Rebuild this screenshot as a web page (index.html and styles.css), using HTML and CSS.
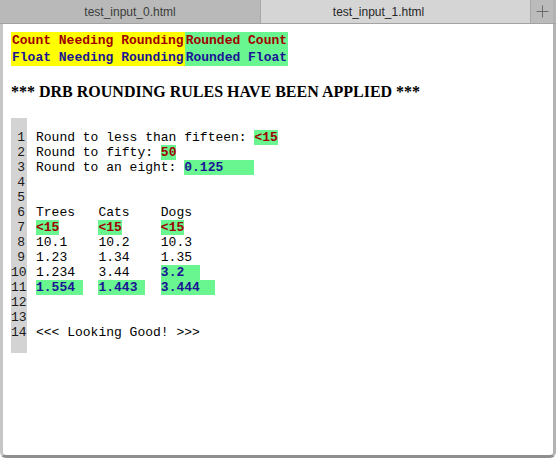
FILE: index.html
```html
<!DOCTYPE html>
<html>
<head>
<meta charset="utf-8">
<link rel="stylesheet" href="styles.css">
</head>
<body>
<div class="window">
  <div class="tabs">
    <div class="tab tab-inactive">test_input_0.html</div>
    <div class="tab tab-active">test_input_1.html</div>
    <div class="newtab">
      <svg width="13" height="13" viewBox="0 0 13 13"><path d="M6.5 0.5v12M0.5 6.5h12" stroke="#6b6b6b" stroke-width="1" fill="none"/></svg>
    </div>
    <div class="edge"></div>
  </div>
  <div class="page">
    <table class="legend">
      <tr class="count"><td class="need">Count Needing Rounding</td><td class="done">Rounded Count</td></tr>
      <tr class="float"><td class="need">Float Needing Rounding</td><td class="done">Rounded Float</td></tr>
    </table>
    <h3 class="title">*** DRB ROUNDING RULES HAVE BEEN APPLIED ***</h3>
    <div class="code">
      <pre class="gutter">1
2
3
4
5
6
7
8
9
10
11
12
13
14</pre>
      <pre class="lines">Round to less than fifteen: <span class="hl c">&lt;15</span>
Round to fifty: <span class="hl c">50</span>
Round to an eight: <span class="hl f">0.125    </span>


Trees   Cats    Dogs
<span class="hl c">&lt;15</span>     <span class="hl c">&lt;15</span>     <span class="hl c">&lt;15</span>
10.1    10.2    10.3
1.23    1.34    1.35
1.234   3.44    <span class="hl f">3.2  </span>
<span class="hl f">1.554 </span>  <span class="hl f">1.443 </span>  <span class="hl f">3.444  </span>


&lt;&lt;&lt; Looking Good! &gt;&gt;&gt;</pre>
    </div>
  </div>
</div>
</body>
</html>
```
FILE: styles.css
```css
html, body {
  margin: 0;
  padding: 0;
  background: #ffffff;
}
.window {
  width: 556px;
  height: 458px;
  display: flex;
  flex-direction: column;
  box-sizing: border-box;
}
.tabs {
  height: 23px;
  flex: 0 0 23px;
  display: flex;
  border-bottom: 1px solid #a2a2a2;
  font-family: "Liberation Sans", Arial, sans-serif;
  font-size: 12px;
}
.tab {
  display: flex;
  align-items: center;
  justify-content: center;
  border-right: 1px solid #a7a7a7;
  box-sizing: border-box;
}
.tab-inactive {
  flex: 0 0 261px;
  background: #b9b9b9;
  color: #3c3c3c;
}
.tab-active {
  flex: 0 0 270px;
  background: #d6d5d6;
  color: #262626;
  padding-right: 34px;
}
.newtab {
  flex: 0 0 22px;
  background: #bbbbbb;
  display: flex;
  align-items: center;
  justify-content: center;
}
.edge {
  flex: 1;
  background: #b3b3b3;
}
.page {
  flex: 1;
  background: #ffffff;
  border-left: 3px solid #c6c6c6;
  border-right: 3px solid #b3b3b3;
  border-bottom: 3px solid #8e8e8e;
  border-radius: 0 0 6px 6px;
  padding: 8px;
}
.legend {
  border-collapse: collapse;
  font-family: "Liberation Mono", "Courier New", monospace;
  font-weight: bold;
  font-size: 13px;
  line-height: 15px;
}
.legend td {
  padding: 1px;
  white-space: pre;
}
.legend .need { background: #ffff00; }
.legend .done { background: #69f58f; }
.count td { color: #a00000; }
.float td { color: #1a1496; }
.title {
  font-family: "Liberation Serif", "Times New Roman", serif;
  font-size: 16px;
  line-height: 20px;
  font-weight: bold;
  color: #000;
  margin: 16px 0 0 0;
}
.code {
  display: flex;
  margin-top: 16px;
  font-family: "Liberation Mono", "Courier New", monospace;
  font-size: 13px;
  line-height: 15px;
  color: #000;
}
.code pre {
  margin: 0;
  font: inherit;
}
.gutter {
  background: #d3d3d3;
  width: 16px;
  box-sizing: border-box;
  text-align: right;
  padding: 12px 2px 13px 0;
  color: #1a1a1a;
}
.lines {
  padding: 12px 0 0 9px;
}
.hl {
  background: #69f58f;
  font-weight: bold;
}
.hl.c { color: #a00000; }
.hl.f { color: #1a1496; }
```
